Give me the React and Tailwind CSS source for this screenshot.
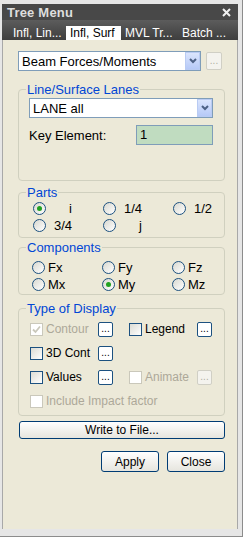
import React from 'react';

const Radio = ({ checked }) => (
    <span className="w-[13px] h-[13px] rounded-full border border-[#1c5180] bg-linear-to-br from-[#d8d8d0] to-white flex items-center justify-center shrink-0">
        {checked && <span className="w-[5px] h-[5px] rounded-full bg-[#21a121]" />}
    </span>
);

const Check = ({ checked, disabled }) => (
    <span
        className={`w-[13px] h-[13px] border flex items-center justify-center shrink-0 ${
            disabled ? 'border-[#cac8bb] bg-white' : 'border-[#1c5180] bg-linear-to-br from-[#dcdcd4] to-white'
        }`}
    >
        {checked && (
            <svg width="9" height="9" viewBox="0 0 9 9">
                <path d="M1 4.5 L3.5 7 L8 1.5" fill="none" stroke={disabled ? '#cac8bb' : '#21a121'} strokeWidth="1.8" />
            </svg>
        )}
    </span>
);

const DotButton = ({ disabled }) => (
    <span
        className={`w-[15px] h-[15px] rounded-[2px] border flex items-end justify-center text-[10px] leading-none pb-[2px] shrink-0 ${
            disabled ? 'border-[#d0cfc5] bg-[#f4f3ee] text-[#b0afa4]' : 'border-[#1c5180] bg-white text-black'
        }`}
    >
        ...
    </span>
);

const Select = ({ value, className }) => (
    <div className={`flex items-center bg-white border border-[#7f9db9] ${className}`}>
        <span className="flex-1 pl-[3px] text-[13px] leading-none text-black">{value}</span>
        <span className="w-[15px] h-full border border-[#b9cbf3] bg-linear-to-b from-[#dbe5fd] to-[#b6c9f7] flex items-center justify-center">
            <svg width="8" height="6" viewBox="0 0 8 6">
                <path d="M1 1 L4 4 L7 1" fill="none" stroke="#4d6185" strokeWidth="2" />
            </svg>
        </span>
    </div>
);

// fieldset keeps no padding so the legend sits 9px in from the border
const Group = ({ title, className, children }) => (
    <fieldset className={`min-w-0 p-0 border border-[#d0d0bf] rounded-[4px] ${className}`}>
        <legend className="ml-[7px] px-[1px] text-[13px] leading-[15px] text-[#0046d5]">{title}</legend>
        {children}
    </fieldset>
);

const App = () => {
    const parts = [
        [{ label: 'i', checked: true }, { label: '1/4' }, { label: '1/2' }],
        [{ label: '3/4' }, { label: 'j' }]
    ];
    const components = [
        [{ label: 'Fx' }, { label: 'Fy' }, { label: 'Fz' }],
        [{ label: 'Mx' }, { label: 'My', checked: true }, { label: 'Mz' }]
    ];
    const tabs = ['Infl, Lin...', 'Infl, Surf', 'MVL Tr...', 'Batch ...'];

    return (
        <div className="w-[243px] h-[537px] bg-[#e6e6e6] pl-[2px] pr-[4px] pt-[4px] pb-[7px] border-r border-b border-[#8c8c8c] flex flex-col font-['Liberation_Sans',Arial,sans-serif] overflow-hidden">
            {/* title */}
            <div className="h-[16px] bg-[#484848] flex items-center justify-between pl-[5px] pr-[7px]">
                <span className="text-[13px] font-bold leading-none text-[#dedede] tracking-[0.2px]">Tree Menu</span>
                <svg width="9" height="9" viewBox="0 0 9 9">
                    <path d="M1 1 L8 8 M8 1 L1 8" stroke="#f0f0f0" strokeWidth="2" />
                </svg>
            </div>

            {/* tabs */}
            <div className="h-[20px] bg-linear-to-b from-[#5c5c5c] to-[#3e3e3e] flex items-end pl-[7px] text-[12px]">
                {tabs.map((tab, i) => (
                    <span
                        key={tab}
                        className={`h-[14px] leading-[14px] whitespace-nowrap ${
                            i === 1 ? 'bg-white text-black w-[55px] pl-[4px]' : 'text-white w-[57px] pl-[4px]'
                        }`}
                    >
                        {tab}
                    </span>
                ))}
            </div>

            {/* content */}
            <div className="flex-1 bg-[#ece9d8] border-l border-[#a8a8a8] border-r border-[#8c8c8c] pl-[15px] pr-[12px] flex flex-col">
                <div className="mt-[11px] flex items-center gap-[5px]">
                    <Select value="Beam Forces/Moments" className="w-[183px] h-[20px]" />
                    <span className="w-[16px] h-[18px] rounded-[2px] border border-[#d0cfc5] bg-[#f4f3ee] flex items-end justify-center text-[10px] leading-none pb-[3px] text-[#b0afa4]">
                        ...
                    </span>
                </div>

                <Group title="Line/Surface Lanes" className="mt-[11px]">
                    <div className="pl-[10px] pr-[11px] pb-[35px]">
                        <Select value="LANE all" className="mt-[1px] h-[20px]" />
                        <div className="mt-[7px] flex items-center justify-between">
                            <span className="text-[13px] leading-none text-black">Key Element:</span>
                            <span className="w-[77px] h-[20px] border border-[#7f9db9] bg-[#c0dcc0] text-[13px] leading-[18px] pl-[3px] text-black">1</span>
                        </div>
                    </div>
                </Group>

                <Group title="Parts" className="mt-[4px]">
                    <div className="pl-[14px] pb-[3px]">
                        {parts.map((row, r) => (
                            <div key={r} className="h-[17px] flex items-center">
                                {row.map((p) => (
                                    <div key={p.label} className="w-[70px] last:w-auto flex items-center">
                                        <Radio checked={p.checked} />
                                        <span className="w-[26px] text-right text-[13px] leading-none text-black">{p.label}</span>
                                    </div>
                                ))}
                            </div>
                        ))}
                    </div>
                </Group>

                <Group title="Components" className="mt-[2px]">
                    <div className="pl-[13px] pt-[4px] pb-[1px]">
                        {components.map((row, r) => (
                            <div key={r} className="h-[17px] flex items-center">
                                {row.map((c) => (
                                    <div key={c.label} className="w-[70px] last:w-auto flex items-center gap-[3px]">
                                        <Radio checked={c.checked} />
                                        <span className="text-[13px] leading-none text-black">{c.label}</span>
                                    </div>
                                ))}
                            </div>
                        ))}
                    </div>
                </Group>

                <Group title="Type of Display" className="mt-[6px] text-[12px]">
                    <div className="pl-[11px] pt-[3px] pb-[4px] flex flex-col gap-[4px]">
                        <div className="h-[20px] flex items-center">
                            <div className="w-[99px] flex items-center">
                                <Check checked disabled />
                                <span className="w-[55px] pl-[3px] text-[#aca899]">Contour</span>
                                <DotButton />
                            </div>
                            <div className="flex items-center">
                                <Check />
                                <span className="w-[55px] pl-[3px] text-black">Legend</span>
                                <DotButton />
                            </div>
                        </div>
                        <div className="h-[20px] flex items-center">
                            <Check />
                            <span className="w-[55px] pl-[3px] text-black">3D Cont</span>
                            <DotButton />
                        </div>
                        <div className="h-[20px] flex items-center">
                            <div className="w-[99px] flex items-center">
                                <Check />
                                <span className="w-[55px] pl-[3px] text-black">Values</span>
                                <DotButton />
                            </div>
                            <div className="flex items-center">
                                <Check disabled />
                                <span className="w-[55px] pl-[3px] text-[#aca899]">Animate</span>
                                <DotButton disabled />
                            </div>
                        </div>
                        <div className="h-[20px] flex items-center">
                            <Check disabled />
                            <span className="pl-[3px] text-[#aca899]">Include Impact factor</span>
                        </div>
                    </div>
                </Group>

                <button className="mt-[5px] ml-[1px] h-[18px] rounded-[3px] border border-[#003c74] bg-linear-to-b from-white to-[#e6e5de] text-[12px] leading-none text-black">
                    Write to File...
                </button>

                <div className="mt-[12px] flex justify-end gap-[8px]">
                    <button className="w-[58px] h-[21px] rounded-[3px] border border-[#003c74] bg-linear-to-b from-white to-[#e6e5de] text-[12px] leading-none text-black">
                        Apply
                    </button>
                    <button className="w-[58px] h-[21px] rounded-[3px] border border-[#003c74] bg-linear-to-b from-white to-[#e6e5de] text-[12px] leading-none text-black">
                        Close
                    </button>
                </div>
            </div>
        </div>
    );
};

export default App;
